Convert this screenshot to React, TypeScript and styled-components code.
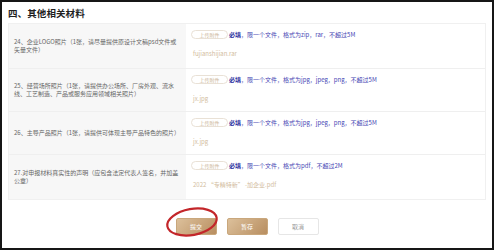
import React from 'react';
import styled, { createGlobalStyle } from 'styled-components';

const GlobalStyle = createGlobalStyle`
  html, body {
    margin: 0;
    padding: 0;
    background: #fff;
  }
  * {
    box-sizing: border-box;
  }
`;

// 外框
const Frame = styled.div`
  width: 494px;
  height: 250px;
  border: 2px solid #161616;
  background: #fff;
  padding: 0 6px 0 6px;
  font-family: "Noto Sans CJK SC", "Liberation Sans", sans-serif;
  display: flex;
  flex-direction: column;
`;

const Title = styled.h2`
  margin: 0;
  height: 21px;
  display: flex;
  align-items: center;
  padding-top: 1px;
  font-size: 9.5px;
  font-weight: 700;
  color: #1f1f1f;
  letter-spacing: 0.1px;
`;

const Table = styled.div`
  width: 478px;
  border: 1px solid #f0f0f0;
  display: flex;
  flex-direction: column;
`;

const Row = styled.div<{ $h: number }>`
  display: grid;
  grid-template-columns: 177px 1fr;
  height: ${(p) => p.$h}px;
  border-top: 1px solid #efefef;
  &:first-child {
    border-top: none;
  }
`;

const Label = styled.div`
  background: #f7f7f7;
  padding: 0 5px 0 5px;
  display: flex;
  align-items: center;
  font-size: 6px;
  line-height: 8.5px;
  color: #666;
`;

const Field = styled.div`
  padding: 6px 0 0 5px;
  display: flex;
  flex-direction: column;
`;

const UploadLine = styled.div`
  display: flex;
  align-items: center;
  height: 9px;
`;

const UploadButton = styled.button`
  width: 37px;
  height: 9px;
  padding: 0;
  border: 1px solid #e9e1d6;
  border-radius: 5px;
  background: #fff;
  color: #cdb79c;
  font-family: inherit;
  font-size: 5px;
  line-height: 7px;
  margin-right: 1px;
`;

const Hint = styled.span`
  font-size: 6px;
  color: #4545b3;
  white-space: nowrap;
  b {
    font-weight: 700;
    color: #2f2fa0;
  }
`;

const FileName = styled.div`
  margin-top: 10px;
  padding-left: 2px;
  font-size: 6px;
  color: #d2bc9e;
`;

const Actions = styled.div`
  display: flex;
  justify-content: center;
  align-items: flex-start;
  gap: 10px;
  margin-top: 18px;
`;

const Btn = styled.button<{ $primary?: boolean }>`
  display: block;
  width: 41px;
  height: 17px;
  padding: 0;
  border-radius: 2px;
  font-family: inherit;
  font-size: 6px;
  border: 1px solid ${(p) => (p.$primary ? '#c9a77c' : '#e6e6e6')};
  background: ${(p) =>
    p.$primary ? 'linear-gradient(135deg, #dcc09b 0%, #b88e60 100%)' : '#fff'};
  color: ${(p) => (p.$primary ? '#fff' : '#999')};
`;

const Marked = styled.div`
  position: relative;
  display: flex;
`;

// 红色圈注
const Circle = styled.svg`
  position: absolute;
  left: -14px;
  top: -14px;
  width: 60px;
  height: 36px;
  pointer-events: none;
  overflow: visible;
`;

const rows = [
  {
    h: 44,
    label: '24、企业LOGO照片（1张，请尽量提供原设计文稿psd文件或矢量文件）',
    hint: '限一个文件，格式为zip，rar，不超过5M',
    file: 'fujianshijian.rar',
  },
  {
    h: 43,
    label: '25、经营场所照片（1张，请提供办公场所、厂房外观、流水线、工艺制造、产品或服务应用领域相关照片）',
    hint: '限一个文件，格式为jpg，jpeg，png，不超过5M',
    file: 'jx.jpg',
  },
  {
    h: 43,
    label: '26、主导产品照片（1张，请提供可体现主导产品特色的照片）',
    hint: '限一个文件，格式为jpg，jpeg，png，不超过5M',
    file: 'jx.jpg',
  },
  {
    h: 45,
    label: '27.对申报材料真实性的声明（应包含法定代表人签名，并加盖公章）',
    hint: '限一个文件，格式为pdf，不超过2M',
    file: '2022 “专精特新” -加企业.pdf',
  },
];

export default function App() {
  return (
    <>
      <GlobalStyle />
      <Frame>
        <Title>四、其他相关材料</Title>
        <Table>
          {rows.map((r) => (
            <Row key={r.label} $h={r.h}>
              <Label>{r.label}</Label>
              <Field>
                <UploadLine>
                  <UploadButton>上传附件</UploadButton>
                  <Hint>
                    <b>必填</b>，{r.hint}
                  </Hint>
                </UploadLine>
                <FileName>{r.file}</FileName>
              </Field>
            </Row>
          ))}
        </Table>
        <Actions>
          <Marked>
            <Btn $primary>提交</Btn>
            <Circle viewBox="0 0 60 36">
              <ellipse
                cx="30"
                cy="18"
                rx="25"
                ry="13"
                fill="none"
                stroke="#c3262a"
                strokeWidth="2.2"
                transform="rotate(-10 30 18)"
              />
            </Circle>
          </Marked>
          <Btn $primary>暂存</Btn>
          <Btn>取消</Btn>
        </Actions>
      </Frame>
    </>
  );
}
